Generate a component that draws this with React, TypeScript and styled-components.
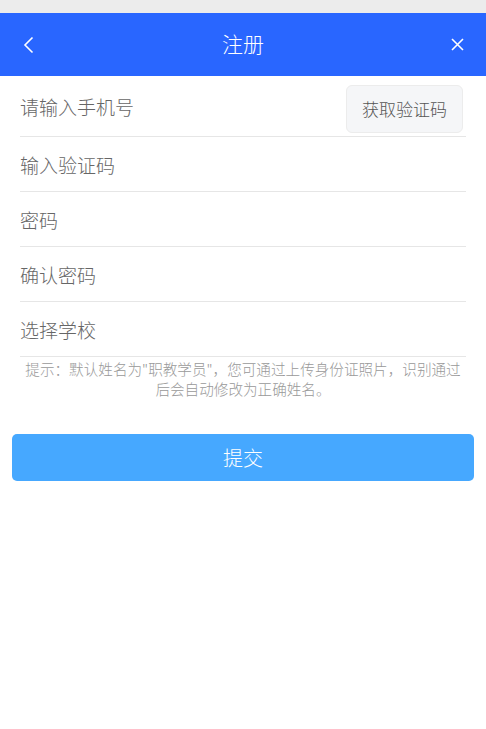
import styled, { createGlobalStyle } from "styled-components";

const GlobalStyle = createGlobalStyle`
  html, body {
    margin: 0;
    padding: 0;
    background: #ffffff;
    font-family: "Noto Sans CJK SC", "Noto Sans", sans-serif;
  }
`;

const Page = styled.div`
  width: 486px;
  min-height: 729px;
  background: #fff;
`;

const StatusStrip = styled.div`
  height: 13px;
  background: #ececec;
`;

const Header = styled.header`
  height: 63px;
  background: #2966ff;
  display: grid;
  grid-template-columns: 58px 1fr 58px;
  align-items: center;
  color: #fff;
`;

const Title = styled.h1`
  margin: 0;
  text-align: center;
  font-size: 21px;
  font-weight: 300;
  line-height: 1;
  padding-bottom: 2px;
`;

const IconButton = styled.button`
  border: 0;
  background: transparent;
  color: #fff;
  display: flex;
  align-items: center;
  justify-content: center;
  padding: 0;
  height: 63px;
  cursor: pointer;
`;

const Form = styled.form`
  padding: 0 20px;
  display: flex;
  flex-direction: column;
`;

const Row = styled.div<{ $tall?: boolean }>`
  height: ${(p) => (p.$tall ? 60 : 54)}px;
  border-bottom: 1px solid #e6e6e6;
  display: flex;
  align-items: center;
  justify-content: space-between;
`;

const Field = styled.input`
  flex: 1;
  min-width: 0;
  border: 0;
  outline: none;
  background: transparent;
  font-family: inherit;
  font-size: 19px;
  font-weight: 300;
  color: #333;
  padding: 0;
  padding-top: 1px;

  &::placeholder {
    color: #666;
  }
`;

const CodeButton = styled.button`
  width: 117px;
  height: 48px;
  margin: 5px 3px 0 0;
  border: 1px solid #ececec;
  border-radius: 6px;
  background: #f5f6f8;
  color: #555;
  font-family: inherit;
  font-size: 17px;
  font-weight: 300;
  padding: 0;
`;

const Hint = styled.p`
  margin: 0 -6px;
  padding: 2px 0 0;
  text-align: center;
  font-size: 14.6px;
  font-weight: 300;
  line-height: 20px;
  color: #999;
  white-space: nowrap;
`;

const Submit = styled.button`
  display: block;
  width: 462px;
  height: 47px;
  margin: 35px auto 0;
  border: 0;
  border-radius: 5px;
  background: #46a8ff;
  color: #fff;
  font-family: inherit;
  font-size: 20px;
  font-weight: 300;
`;

const fields = ["输入验证码", "密码", "确认密码", "选择学校"];

export default function App() {
  return (
    <Page>
      <GlobalStyle />
      <StatusStrip />
      <Header>
        <IconButton aria-label="返回">
          <svg width="12" height="18" viewBox="0 0 12 18" fill="none">
            <path d="M9.5 1.5 L2 9 L9.5 16.5" stroke="#fff" strokeWidth="1.6" />
          </svg>
        </IconButton>
        <Title>注册</Title>
        <IconButton aria-label="关闭">
          <svg width="13" height="13" viewBox="0 0 13 13" fill="none">
            <path d="M1 1 L12 12 M12 1 L1 12" stroke="#fff" strokeWidth="1.6" />
          </svg>
        </IconButton>
      </Header>
      <Form onSubmit={(e) => e.preventDefault()}>
        <Row $tall>
          <Field placeholder="请输入手机号" />
          <CodeButton type="button">获取验证码</CodeButton>
        </Row>
        {fields.map((f) => (
          <Row key={f}>
            <Field placeholder={f} type={f.includes("密码") ? "password" : "text"} />
          </Row>
        ))}
        <Hint>
          提示：默认姓名为"职教学员"，您可通过上传身份证照片，识别通过
          <br />
          后会自动修改为正确姓名。
        </Hint>
      </Form>
      <Submit type="submit">提交</Submit>
    </Page>
  );
}
